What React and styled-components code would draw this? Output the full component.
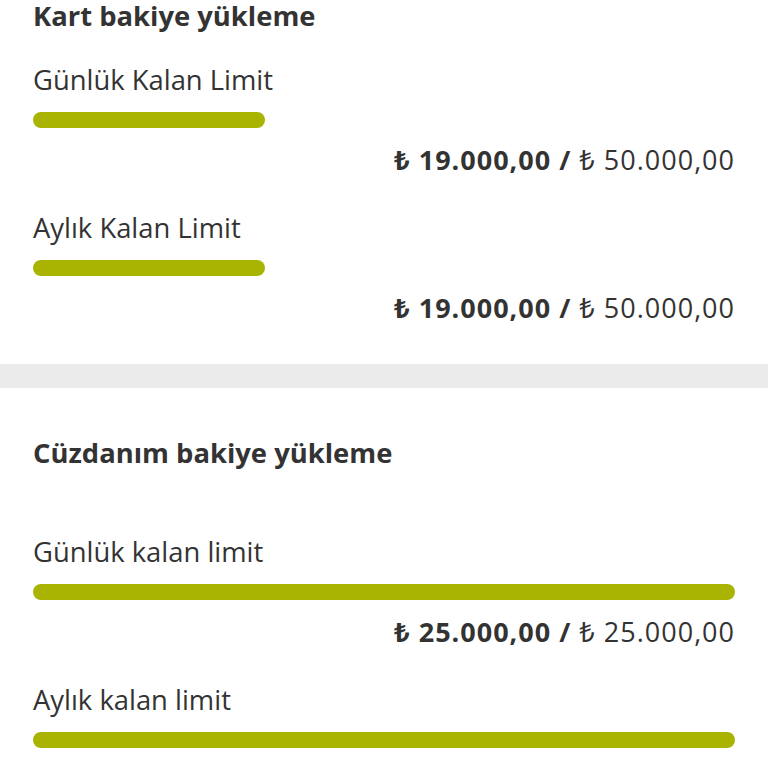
import React from "react";
import styled, { createGlobalStyle } from "styled-components";

const Global = createGlobalStyle`
  html, body { margin: 0; padding: 0; background: #ffffff; }
  body { font-family: "Open Sans", "Noto Sans", sans-serif; color: #333333; }
`;

const Page = styled.div`
  width: 768px;
  height: 768px;
  overflow: hidden;
  background: #ffffff;
`;

const Section = styled.section`
  padding: ${(p) => p.$top}px 33px ${(p) => p.$bottom}px;
  display: flex;
  flex-direction: column;
`;

const Title = styled.h2`
  margin: 0;
  font-size: 27.4px;
  line-height: 32px;
  font-weight: 700;
  color: #333333;
`;

const Block = styled.div`
  display: flex;
  flex-direction: column;
  margin-top: ${(p) => p.$gap}px;
`;

const Label = styled.div`
  font-size: 27.4px;
  line-height: 32px;
  font-weight: 400;
  color: #333333;
`;

const Track = styled.div`
  margin-top: 16px;
  height: 16px;
  width: 100%;
`;

const Fill = styled.div`
  height: 100%;
  background: #a8b400;
  border-radius: 8px;
`;

const Amount = styled.div`
  margin-top: 16px;
  font-size: 27px;
  line-height: 32px;
  letter-spacing: 1px;
  text-align: right;
  color: #333333;
  white-space: nowrap;
`;

const Strong = styled.span`
  font-weight: 700;
`;

const Band = styled.div`
  height: 24px;
  background: #ebebeb;
`;

const fmt = (n) =>
  n.toLocaleString("tr-TR", { minimumFractionDigits: 2, maximumFractionDigits: 2 });

const LimitRow = ({ label, remaining, total, ratio, gap }) => (
  <Block $gap={gap}>
    <Label>{label}</Label>
    <Track>
      <Fill style={{ width: `${ratio * 100}%` }} />
    </Track>
    <Amount>
      <Strong>₺ {fmt(remaining)} /</Strong> ₺ {fmt(total)}
    </Amount>
  </Block>
);

export default function App() {
  return (
    <Page>
      <Global />
      <Section $top={0} $bottom={40}>
        <Title>Kart bakiye yükleme</Title>
        <LimitRow label="Günlük Kalan Limit" remaining={19000} total={50000} ratio={0.33} gap={32} />
        <LimitRow label="Aylık Kalan Limit" remaining={19000} total={50000} ratio={0.33} gap={36} />
      </Section>
      <Band />
      <Section $top={49} $bottom={0}>
        <Title>Cüzdanım bakiye yükleme</Title>
        <LimitRow label="Günlük kalan limit" remaining={25000} total={25000} ratio={1} gap={67} />
        <LimitRow label="Aylık kalan limit" remaining={25000} total={25000} ratio={1} gap={36} />
      </Section>
    </Page>
  );
}
